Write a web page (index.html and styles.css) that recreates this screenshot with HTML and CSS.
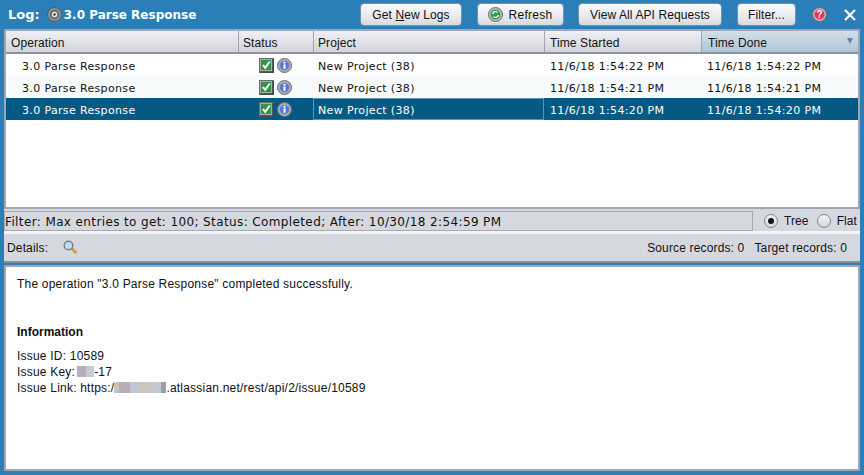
FILE: index.html
```html
<!DOCTYPE html>
<html lang="en">
<head>
<meta charset="utf-8">
<title>Log</title>
<link rel="stylesheet" href="styles.css">
</head>
<body>
<svg class="defs" width="0" height="0" aria-hidden="true">
  <defs>
    <symbol id="ok" viewBox="0 0 15 15">
      <rect x="0.5" y="0.5" width="14" height="14" fill="#a9b0ab" stroke="#66706a"/>
      <path d="M1 14h13V1" fill="none" stroke="#3a423d" stroke-width="1.6"/>
      <rect x="2" y="2" width="10" height="10" fill="#2f9445"/>
      <path d="M4 7l2.2 2.8L10.8 3.5" fill="none" stroke="#fff" stroke-width="2"/>
    </symbol>
    <symbol id="info" viewBox="0 0 15 15">
      <circle cx="7.5" cy="7.5" r="7" fill="#a8abb0" stroke="#6c7075"/>
      <circle cx="7.5" cy="7.5" r="4.6" fill="#5578d6"/>
      <rect x="6.5" y="3.8" width="2" height="1.8" fill="#fff"/>
      <rect x="6.5" y="6.4" width="2" height="4.4" fill="#fff"/>
    </symbol>
  </defs>
</svg>
<div class="app">
  <header class="titlebar">
    <div class="title">
      <span class="log">Log:</span>
      <svg class="op-icon" viewBox="0 0 15 15" width="15" height="15"><circle cx="7.5" cy="7.5" r="7" fill="#8c9197" stroke="#505960"/><circle cx="7.5" cy="7.5" r="3.6" fill="#dfe2e5" stroke="#4e545c" stroke-width="1.4"/><circle cx="7.5" cy="7.5" r="1.3" fill="#4a5058"/></svg>
      <span>3.0 Parse Response</span>
    </div>
    <div class="actions">
      <button class="btn btn-logs"><span>Get <u>N</u>ew Logs</span></button>
      <button class="btn btn-refresh"><svg viewBox="0 0 15 15" width="15" height="15"><circle cx="7.5" cy="7.5" r="7" fill="#b4b9b4" stroke="#6b736a"/><circle cx="7.5" cy="7.5" r="4.8" fill="#2f9a55"/><path d="M4.6 7a3 3 0 0 1 5-1.6M10.4 8a3 3 0 0 1-5 1.6" fill="none" stroke="#fff" stroke-width="1.3"/></svg><span>Refresh</span></button>
      <button class="btn btn-api">View All API Requests</button>
      <button class="btn btn-filter">Filter...</button>
      <svg class="help" viewBox="0 0 15 15" width="15" height="15"><circle cx="7.5" cy="7.5" r="7" fill="#c4b8bc" stroke="#66666e"/><circle cx="7.5" cy="7.5" r="5" fill="#e8305f"/><text x="7.5" y="11" class="help-q">?</text></svg>
      <svg class="close" viewBox="0 0 12 12" width="12" height="12"><path d="M1 1l10 10M11 1L1 11" stroke="#fff" stroke-width="2.2"/></svg>
    </div>
  </header>

  <section class="table-box">
    <div class="row head">
      <div class="th">Operation</div>
      <div class="th">Status</div>
      <div class="th">Project</div>
      <div class="th th-started">Time Started</div>
      <div class="th th-done sorted">Time Done<span class="sort"></span></div>
    </div>
    <div class="row data">
      <div class="td op">3.0 Parse Response</div>
      <div class="td st"><svg><use href="#ok"/></svg><svg><use href="#info"/></svg></div>
      <div class="td">New Project (38)</div>
      <div class="td time">11/6/18 1:54:22 PM</div>
      <div class="td time">11/6/18 1:54:22 PM</div>
    </div>
    <div class="row data alt">
      <div class="td op">3.0 Parse Response</div>
      <div class="td st"><svg><use href="#ok"/></svg><svg><use href="#info"/></svg></div>
      <div class="td">New Project (38)</div>
      <div class="td time">11/6/18 1:54:21 PM</div>
      <div class="td time">11/6/18 1:54:21 PM</div>
    </div>
    <div class="row data selected">
      <div class="td op">3.0 Parse Response</div>
      <div class="td st"><svg><use href="#ok"/></svg><svg><use href="#info"/></svg></div>
      <div class="td focus">New Project (38)</div>
      <div class="td time">11/6/18 1:54:20 PM</div>
      <div class="td time">11/6/18 1:54:20 PM</div>
    </div>
  </section>

  <div class="filter-row">
    <div class="filter-text">Filter: Max entries to get: 100; Status: Completed; After: 10/30/18 2:54:59 PM</div>
    <label class="radio"><span class="dot on"></span>Tree</label>
    <label class="radio"><span class="dot"></span>Flat</label>
  </div>

  <div class="details-bar">
    <span>Details:</span>
    <svg class="mag" viewBox="0 0 15 15" width="15" height="15"><path d="M7.5 7.5l6 5.5" stroke="#c9a050" stroke-width="3"/><circle cx="5.5" cy="5.5" r="4.3" fill="#c5deef" stroke="#6f8090" stroke-width="1.4"/></svg>
    <span class="spacer"></span>
    <span>Source records: 0</span>
    <span>Target records: 0</span>
  </div>

  <main class="details">
    <p class="msg">The operation "3.0 Parse Response" completed successfully.</p>
    <h2>Information</h2>
    <p>Issue ID: 10589</p>
    <p>Issue Key:<span class="blur blur-key"></span>-17</p>
    <p>Issue Link: https:/<span class="blur blur-link"></span>.atlassian.net/rest/api/2/issue/10589</p>
  </main>
</div>
</body>
</html>
```
FILE: styles.css
```css
* { box-sizing: border-box; }
html, body { margin: 0; height: 100%; }
body { width: 864px; height: 475px; overflow: hidden; background: #2a7fb8; font-family: "Liberation Sans", Arial, sans-serif; font-size: 12px; color: #111; }
.defs { display: block; height: 0; }
.app { height: 475px; padding: 0 4px 4px; display: flex; flex-direction: column; }

.titlebar { height: 29px; margin: 0 -4px; padding: 0 8px; display: flex; align-items: center; justify-content: space-between; flex: none; }
.title { display: flex; align-items: center; color: #fff; font: bold 12px "DejaVu Sans", sans-serif; }
.log { font-size: 13px; margin-right: 7px; }
.op-icon { margin-right: 2px; }
.actions { display: flex; align-items: center; }
.btn { height: 23px; padding: 0; border: 1px solid #6d93ad; border-radius: 4px; background: linear-gradient(#fbfbfc, #e4e6ea 70%, #d6d9de); font: 12px "Liberation Sans", Arial, sans-serif; letter-spacing: .1px; color: #111; display: flex; align-items: center; justify-content: center; }
.btn-logs { width: 102px; margin-right: 15px; }
.btn-refresh { width: 87px; margin-right: 14px; gap: 5px; letter-spacing: .3px; }
.btn-api { width: 144px; margin-right: 15px; }
.btn-filter { width: 59px; margin-right: 16px; }
.help { margin-right: 17px; }
.help-q { font: bold 10px "Liberation Sans", sans-serif; fill: #fff; text-anchor: middle; }

.table-box { flex: none; height: 180px; background: #fff; border: 2px solid #a2a6b4; }
.row { display: grid; grid-template-columns: 232px 75px 231px 157px 1fr; }
.head { height: 23px; background: linear-gradient(#eff0f3, #dcdde3 70%, #d3d5dc); border-bottom: 2px solid #8d92a5; }
.th { padding: 4px 0 0 4px; letter-spacing: .1px; border-left: 1px solid #a0a4b2; line-height: 16px; position: relative; }
.th:first-child { border-left: 0; padding-left: 5px; }
.th-started { padding-left: 5px; }
.th-done { padding-left: 6px; }
.sorted { background: linear-gradient(#d5e0e8, #afc4d5); }
.sort { position: absolute; right: 5px; top: 7px; border: 3px solid transparent; border-top: 6px solid #5c84aa; border-bottom: 0; }
.data { height: 22px; grid-template-rows: 22px; font: 11px/26px "DejaVu Sans", sans-serif; letter-spacing: .35px; color: #111; }
.alt { background: #f8fbfc; }
.selected { background: #055a84; color: #fff; }
.td { padding-left: 5px; white-space: nowrap; }
.op { padding-left: 16px; }
.time { padding-left: 6px; }
.st { display: flex; align-items: center; gap: 3px; padding-left: 21px; }
.st svg { width: 15px; height: 15px; }
.focus { border: 1px solid #5d93b5; line-height: 24px; padding-left: 4px; }

.filter-row { flex: none; height: 25px; padding-top: 2px; display: flex; align-items: center; background: #d6d8df; border-bottom: 3px solid #f4f5f7; color: #111; }
.filter-text { flex: none; width: 749px; height: 20px; margin-right: 11px; border: 1px solid #a5a8b5; font: 12px/20px "DejaVu Sans", sans-serif; letter-spacing: .38px; white-space: nowrap; }
.radio { display: flex; align-items: center; gap: 6px; margin-right: 8px; letter-spacing: .1px; }
.dot { width: 14px; height: 14px; border-radius: 50%; background: linear-gradient(#f2f3f5, #d4d6dc); border: 1px solid #7d8796; display: flex; align-items: center; justify-content: center; }
.on::after { content: ""; width: 6px; height: 6px; border-radius: 50%; background: #111; }

.details-bar { flex: none; height: 29px; display: flex; align-items: center; gap: 10px; padding: 0 13px 0 3px; background: #d6d8df; border-bottom: 2px solid #8d909c; letter-spacing: .15px; }
.mag { margin-left: 5px; }
.spacer { flex: 1; }

.details { flex: 1; margin-top: 2px; background: #fff; border: 2px solid #a2a6b4; padding: 9px 11px; line-height: 16px; letter-spacing: .21px; }
.details p { margin: 0; }
.details .msg { margin-bottom: 32px; }
.details h2 { margin: 0 0 8px; font-size: 12px; line-height: 16px; letter-spacing: 0; }
.blur { display: inline-block; height: 11px; vertical-align: -1px; }
.blur-key { width: 17px; margin-left: 2px; background: linear-gradient(90deg, #b8b0b8 0 55%, #c4ced0 55%); }
.blur-link { width: 52px; background: linear-gradient(90deg, #c8c4b8 0 10%, #b6aeb8 10% 30%, #c2c6d0 30% 50%, #cbc5ba 50% 70%, #c4c8d2 70% 90%, #a09ca8 90%); }
```
